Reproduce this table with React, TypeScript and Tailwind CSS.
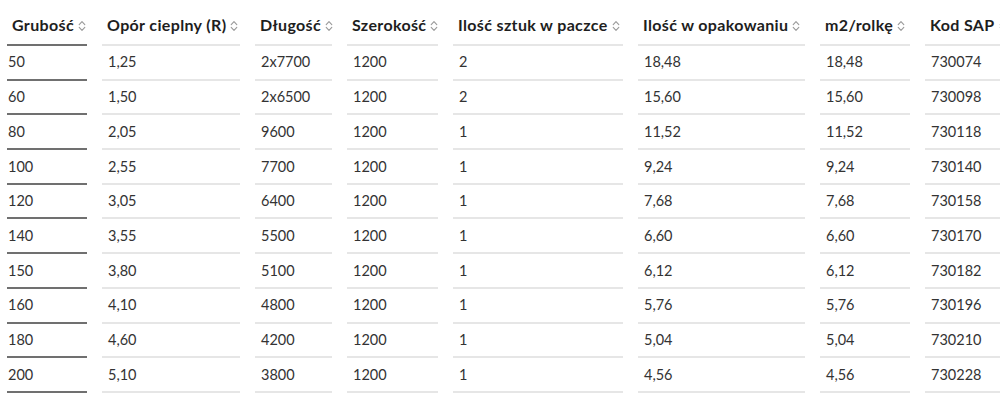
const columns = [
  "Grubość",
  "Opór cieplny (R)",
  "Długość",
  "Szerokość",
  "Ilość sztuk w paczce",
  "Ilość w opakowaniu",
  "m2/rolkę",
  "Kod SAP",
]

const rows = [
  ["50", "1,25", "2x7700", "1200", "2", "18,48", "18,48", "730074"],
  ["60", "1,50", "2x6500", "1200", "2", "15,60", "15,60", "730098"],
  ["80", "2,05", "9600", "1200", "1", "11,52", "11,52", "730118"],
  ["100", "2,55", "7700", "1200", "1", "9,24", "9,24", "730140"],
  ["120", "3,05", "6400", "1200", "1", "7,68", "7,68", "730158"],
  ["140", "3,55", "5500", "1200", "1", "6,60", "6,60", "730170"],
  ["150", "3,80", "5100", "1200", "1", "6,12", "6,12", "730182"],
  ["160", "4,10", "4800", "1200", "1", "5,76", "5,76", "730196"],
  ["180", "4,60", "4200", "1200", "1", "5,04", "5,04", "730210"],
  ["200", "5,10", "3800", "1200", "1", "4,56", "4,56", "730228"],
]

function SortIcon() {
  return (
    <svg width="8" height="12" viewBox="0 0 8 12" fill="none" className="shrink-0">
      <path d="M1.2 4.6 L4 1.6 L6.8 4.6" stroke="#9a9a9a" strokeWidth="1.1" strokeLinecap="round" strokeLinejoin="round" />
      <path d="M1.2 7.4 L4 10.4 L6.8 7.4" stroke="#9a9a9a" strokeWidth="1.1" strokeLinecap="round" strokeLinejoin="round" />
    </svg>
  )
}

export default function App() {
  return (
    <div className="w-[1000px] h-[400px] overflow-hidden bg-white" style={{ fontFamily: "Lato, 'Noto Sans', sans-serif" }}>
      <div className="grid grid-cols-[80px_138px_77px_91px_170px_167px_90px_100px] gap-x-[15px] pl-[7px]">
        {/* Header */}
        {columns.map((col, i) => (
          <div
            key={col}
            className={`h-[46px] flex items-end gap-[4px] pb-[7px] whitespace-nowrap border-b-2 text-[16px] tracking-[0.35px] font-bold text-[#1e1e1e]
              ${i === 0 ? "pl-[5px] border-[#707070]" : "pl-[5px] border-[#e6e6e6]"}`}
          >
            <span>{col}</span>
            <span className="pb-[5px]">
              <SortIcon />
            </span>
          </div>
        ))}

        {/* Rows */}
        {rows.map((row) =>
          row.map((cell, i) => (
            <div
              key={row[0] + "-" + i}
              className={`h-[34.7px] flex items-center border-b-2 text-[14.5px] text-[#333333]
                ${i === 0 ? "pl-[1px] border-[#707070]" : "pl-[6px] border-[#e6e6e6]"}`}
            >
              {cell}
            </div>
          ))
        )}
      </div>
    </div>
  )
}
